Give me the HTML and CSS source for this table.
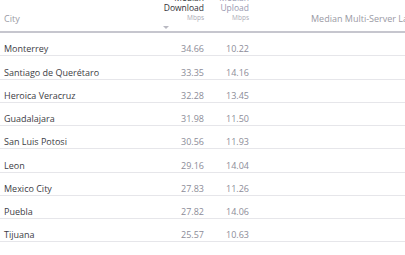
FILE: index.html
```html
<!DOCTYPE html>
<html>
<head>
<meta charset="utf-8">
<link rel="stylesheet" href="styles.css">
</head>
<body>
<div class="viewport">
  <div class="table">
    <div class="head">
      <div class="hcell city-h"><span class="sub-label">City</span></div>
      <div class="hcell num-h active">
        <span class="top">Median</span>
        <span class="title">Download</span>
        <span class="unit">Mbps</span>
        <span class="sort"></span>
      </div>
      <div class="hcell num-h">
        <span class="top">Median</span>
        <span class="title">Upload</span>
        <span class="unit">Mbps</span>
      </div>
      <div class="hcell median-h"><span class="sub-label">Median Multi-Server Latency</span></div>
    </div>
    <div class="row"><div class="city">Monterrey</div><div class="num">34.66</div><div class="num">10.22</div><div></div></div>
    <div class="row"><div class="city">Santiago de Querétaro</div><div class="num">33.35</div><div class="num">14.16</div><div></div></div>
    <div class="row"><div class="city">Heroica Veracruz</div><div class="num">32.28</div><div class="num">13.45</div><div></div></div>
    <div class="row"><div class="city">Guadalajara</div><div class="num">31.98</div><div class="num">11.50</div><div></div></div>
    <div class="row"><div class="city">San Luis Potosi</div><div class="num">30.56</div><div class="num">11.93</div><div></div></div>
    <div class="row"><div class="city">Leon</div><div class="num">29.16</div><div class="num">14.04</div><div></div></div>
    <div class="row"><div class="city">Mexico City</div><div class="num">27.83</div><div class="num">11.26</div><div></div></div>
    <div class="row"><div class="city">Puebla</div><div class="num">27.82</div><div class="num">14.06</div><div></div></div>
    <div class="row"><div class="city">Tijuana</div><div class="num">25.57</div><div class="num">10.63</div><div></div></div>
    <div class="row"><div class="city">Aguascalientes</div><div class="num">25.10</div><div class="num">9.84</div><div></div></div>
  </div>
</div>
</body>
</html>
```
FILE: styles.css
```css
html, body {
  margin: 0;
  padding: 0;
  background: #ffffff;
}
.viewport {
  width: 405px;
  height: 255px;
  overflow: hidden;
  font-family: "Open Sans", "Liberation Sans", sans-serif;
}
.table {
  width: 560px;
  margin-top: -7px;
}
.head, .row {
  display: grid;
  grid-template-columns: 160px 44px 45px 1fr;
}
.head {
  height: 40px;
  border-bottom: 2px solid #c6c6ce;
  box-sizing: border-box;
}
.hcell {
  display: flex;
  flex-direction: column;
  align-items: flex-end;
  line-height: 10px;
}
.city-h, .median-h {
  align-items: flex-start;
  justify-content: flex-start;
  padding-top: 21px;
}
.city-h { padding-left: 4px; }
.median-h { padding-left: 62px; }
.sub-label {
  font-size: 9px;
  color: #9a9aa4;
  white-space: nowrap;
}
.top, .title {
  font-size: 8.5px;
  color: #9898b0;
  white-space: nowrap;
}
.active .title, .active .top { color: #2f2f36; }
.top { line-height: 10px; }
.title { line-height: 10px; }
.unit {
  font-size: 6.5px;
  color: #ababb6;
  line-height: 10px;
}
.sort {
  align-self: flex-start;
  margin: 3px 0 0 3px;
  width: 0;
  height: 0;
  border-left: 3px solid transparent;
  border-right: 3px solid transparent;
  border-top: 3px solid #b9b9c2;
}
.row {
  height: 23.25px;
  box-sizing: border-box;
  border-bottom: 1px solid #e6e6ea;
  align-items: end;
  padding-bottom: 1px;
  font-size: 9px;
  line-height: 11px;
}
.city {
  padding-left: 4px;
  color: #3c3c44;
  white-space: nowrap;
}
.num {
  text-align: right;
  color: #8c8c98;
}
```
